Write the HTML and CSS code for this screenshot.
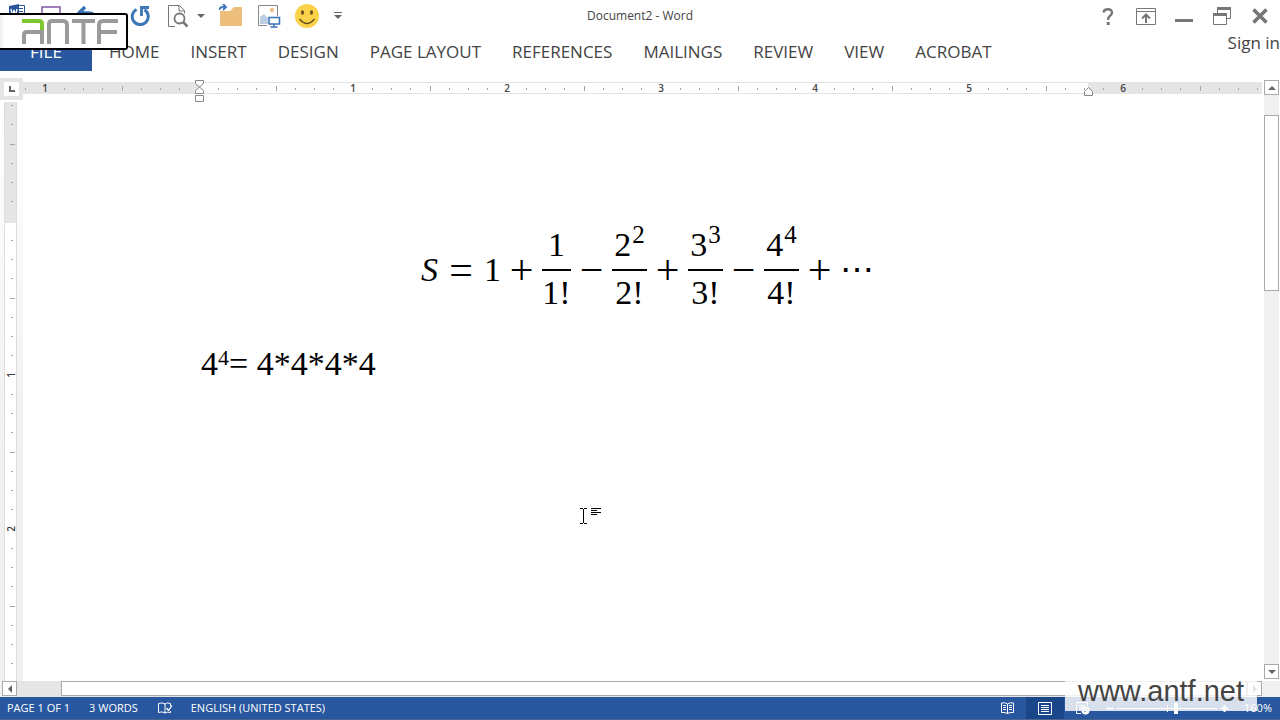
FILE: index.html
```html
<!DOCTYPE html>
<html lang="en">
<head>
<meta charset="utf-8">
<title>Document2 - Word</title>
<link rel="stylesheet" href="styles.css">
</head>
<body>
<div class="app">
  <header class="titlebar">
    <div class="quick">
      <button class="qbtn narrow" aria-label="Word"><svg width="16" height="24" viewBox="0 0 16 24"><path d="M7 1.500h8.500v17H7z" fill="#fff" stroke="#2b579a"/><path d="M9 4.500h5M9 7.500h5M9 10.500h5M9 13.500h5" stroke="#2b579a"/><path d="M0 2l10-2v21l-10-2z" fill="#2b579a"/><path d="M2 5l1.500 7L5 6l1.500 6L8 5" fill="none" stroke="#fff" stroke-width="1.300"/></svg></button>
      <button class="qbtn narrow" aria-label="Save"><svg width="20" height="20" viewBox="0 0 20 20"><path d="M1 1h18v18H1z" fill="#fff" stroke="#8059a5" stroke-width="1.500"/><path d="M5 12h10v7H5z" fill="#8059a5"/></svg></button>
      <button class="qbtn" aria-label="Undo"><svg width="22" height="20" viewBox="0 0 22 20"><path d="M2 7h10q8 0 8 8v4M9 1L3 7l6 6" fill="none" stroke="#3a73b5" stroke-width="3.500"/></svg></button>
      <button class="qbtn caret" aria-label="Undo list"><svg width="8" height="5"><path d="M0 0h8L4 4z" fill="#666"/></svg></button>
      <button class="qbtn" aria-label="Repeat"><svg width="20" height="22" viewBox="0 0 20 22"><path d="M6.500 4.500a8 8 0 1 0 8 .300" fill="none" stroke="#3c76b6" stroke-width="3"/><path d="M11.500 11V2.500h7.500" fill="none" stroke="#3c76b6" stroke-width="2.800"/></svg></button>
      <button class="qbtn" aria-label="Print preview"><svg width="22" height="24" viewBox="0 0 22 24"><path d="M8 22.500H1.500v-21h11l5 5v3M12 1.500v5.500h5.500" fill="none" stroke="#777"/><circle cx="12.500" cy="14.500" r="5" fill="#fff" stroke="#777" stroke-width="1.800"/><path d="M16 18l4.500 4.500" stroke="#777" stroke-width="2.500"/></svg></button>
      <button class="qbtn caret" aria-label="Preview list"><svg width="8" height="5"><path d="M0 0h8L4 4z" fill="#666"/></svg></button>
      <button class="qbtn" aria-label="Open"><svg width="24" height="24" viewBox="0 0 24 24"><path d="M1 22V7h10l4-4h8v19z" fill="#edbd7b"/><path d="M0 6q1-4 6-3M4 0l3 3-3 3" fill="none" stroke="#3a73b5" stroke-width="1.800"/></svg></button>
      <button class="qbtn" aria-label="Pictures"><svg width="24" height="24" viewBox="0 0 24 24"><path d="M10 21.500H1.500v-20h19V12" fill="#fff" stroke="#888"/><circle cx="15" cy="6" r="2.200" fill="#f0c08a"/><path d="M3 20v-7l4-3 4 4v6z" fill="#bccfe4"/><path d="M12 13.500h10.500V20H12z" fill="#fff" stroke="#3a73b5" stroke-width="1.500"/><path d="M17 20v3M13.500 23h7" stroke="#3a73b5" stroke-width="1.500"/></svg></button>
      <button class="qbtn" aria-label="Smiley"><svg width="24" height="24" viewBox="0 0 24 24"><circle cx="12" cy="12" r="12" fill="#fbd148"/><ellipse cx="7.500" cy="8.500" rx="1.500" ry="2.300" fill="#654c20"/><ellipse cx="16.500" cy="8.500" rx="1.500" ry="2.300" fill="#654c20"/><path d="M4.500 15q7.500 9 15 0" fill="none" stroke="#654c20" stroke-width="1.300"/></svg></button>
      <button class="qbtn small" aria-label="Customize toolbar"><svg width="8" height="8"><path d="M0 .5h8" stroke="#666"/><path d="M0 3h8L4 7z" fill="#666"/></svg></button>
    </div>
    <div class="doctitle">Document2 - Word</div>
    <div class="window">
      <button class="wbtn" aria-label="Help"><svg width="12" height="17" viewBox="0 0 12 17"><path d="M1.500 4.500Q2 1.300 6 1.300q4 0 4 3.300 0 1.900-2.200 3.400Q6 9.300 6 12" fill="none" stroke="#777" stroke-width="2.400"/><path d="M4.700 14h3v3h-3z" fill="#777"/></svg></button>
      <button class="wbtn" aria-label="Ribbon display options"><svg width="20" height="17" viewBox="0 0 20 17"><path d="M.5.500h19v16H.5zM.5 3.500h19" fill="none" stroke="#777"/><path d="M10 15V7M6 10.500l4-4 4 4" fill="none" stroke="#777" stroke-width="2"/></svg></button>
      <button class="wbtn" aria-label="Minimize"><svg width="18" height="12"><path d="M0 9h18v3H0z" fill="#777"/></svg></button>
      <button class="wbtn" aria-label="Restore"><svg width="18" height="18" viewBox="0 0 18 18"><path d="M4.500 6V.5h13v11H14" fill="none" stroke="#777"/><path d="M4 0h14v3H4z" fill="#777"/><path d="M.5 6.500h13v11H.5z" fill="#fff" stroke="#777"/><path d="M0 6h14v3H0z" fill="#777"/></svg></button>
      <button class="wbtn" aria-label="Close"><svg width="16" height="16" viewBox="0 0 16 16"><path d="M1.500 1.500l13 13M14.500 1.500l-13 13" stroke="#777" stroke-width="3.600"/></svg></button>
    </div>
  </header>

  <nav class="tabs">
    <button class="file">FILE</button>
    <button class="tab">HOME</button>
    <button class="tab">INSERT</button>
    <button class="tab">DESIGN</button>
    <button class="tab">PAGE LAYOUT</button>
    <button class="tab">REFERENCES</button>
    <button class="tab">MAILINGS</button>
    <button class="tab">REVIEW</button>
    <button class="tab">VIEW</button>
    <button class="tab">ACROBAT</button>
    <a class="signin" href="#">Sign in</a>
  </nav>

  <div class="work">
    <div class="corner"><button class="tabstop" aria-label="Tab stop"><svg width="6" height="6"><path d="M1 0v5h5" fill="none" stroke="#666" stroke-width="2"/></svg></button></div>
    <div class="hruler">
      <svg class="hscale" width="100%" height="22">
        <defs><pattern id="inch" x="176" y="0" width="154" height="22" patternUnits="userSpaceOnUse"><path d="M19.500 10v2M38.500 10v2M57.500 10v2M77.500 8v5M96.500 10v2M115.500 10v2M134.500 10v2" stroke="#a5a5a5"/></pattern></defs>
        <rect y="4" width="100%" height="12" fill="#e5e5e5"/>
        <rect x="176" y="5" width="889" height="10" fill="#fff"/>
        <rect width="100%" height="22" fill="url(#inch)"/>
        <g class="nums"><text x="22" y="14">1</text><text x="330" y="14">1</text><text x="484" y="14">2</text><text x="638" y="14">3</text><text x="792" y="14">4</text><text x="946" y="14">5</text><text x="1100" y="14">6</text></g>
        <path d="M172.500 2.500h8v3l-8 7v3h8v-3l-8-7zM172.500 17.500h8v6h-8z" fill="#fff" stroke="#888"/>
        <path d="M1061.500 17.500v-4l4-4 4 4v4z" fill="#fff" stroke="#888"/>
      </svg>
    </div>
    <div class="vruler">
      <svg width="23" height="100%">
        <defs><pattern id="vinch" x="0" y="119" width="23" height="154" patternUnits="userSpaceOnUse"><path d="M11 19.500h2M11 38.500h2M11 57.500h2M10 77.500h5M11 96.500h2M11 115.500h2M11 134.500h2" stroke="#a5a5a5"/></pattern></defs>
        <rect x="4" width="13" height="100%" fill="#dedede"/>
        <rect x="5" width="11" height="121" fill="#e5e5e5"/>
        <rect x="5" y="121" width="11" height="100%" fill="#fff"/>
        <rect width="23" height="100%" fill="url(#vinch)"/>
        <g class="nums"><text transform="translate(15 273) rotate(-90)">1</text><text transform="translate(15 427) rotate(-90)">2</text></g>
      </svg>
    </div>
    <main class="page">
      <div class="equation">
        <i>S</i><span class="op rel">=</span><span>1</span><span class="op">+</span>
        <span class="frac"><span class="num">1</span><span class="den">1!</span></span><span class="op">−</span>
        <span class="frac wide"><span class="num">2<sup>2</sup></span><span class="den">2!</span></span><span class="op">+</span>
        <span class="frac wide"><span class="num">3<sup>3</sup></span><span class="den">3!</span></span><span class="op">−</span>
        <span class="frac wide"><span class="num">4<sup>4</sup></span><span class="den">4!</span></span><span class="op">+</span><span class="dots">⋯</span>
      </div>
      <p class="line">4<sup>4</sup>= 4*4*4*4</p>
      <svg class="cursor" width="22" height="18"><path d="M0 1.500h3M4 1.500h3M0 16.500h3M4 16.500h3M3.500 2v14M11 1.500h10M11 3.500h6M11 5.500h10M11 7.500h6" stroke="#000"/></svg>
    </main>
    <div class="vscroll">
      <button class="arrow" aria-label="Scroll up"><svg width="8" height="4"><path d="M0 4l4-4 4 4z" fill="#666"/></svg></button>
      <div class="vtrack"><div class="vthumb"></div></div>
      <button class="arrow" aria-label="Scroll down"><svg width="8" height="4"><path d="M0 0h8L4 4z" fill="#666"/></svg></button>
    </div>
  </div>

  <div class="hscroll">
    <button class="arrow" aria-label="Scroll left"><svg width="4" height="8"><path d="M4 0v8L0 4z" fill="#666"/></svg></button>
    <div class="htrack"><div class="hthumb"></div></div>
    <button class="arrow" aria-label="Scroll right"><svg width="4" height="8"><path d="M0 0v8l4-4z" fill="#666"/></svg></button>
  </div>

  <footer class="status">
    <span>PAGE 1 OF 1</span>
    <span>3 WORDS</span>
    <button class="sbtn proof" aria-label="Proofing"><svg width="15" height="13" viewBox="0 0 15 13"><path d="M7 11Q4 9 .5 10.500V1.500Q4 0 7 2zM7 2q2-2 5.500-.500V4M7 11q2-1.500 5.500-.500V9" fill="none" stroke="#fff"/><path d="M8.500 6l2 2.500L14 3.500" fill="none" stroke="#fff" stroke-width="1.300"/></svg></button>
    <span>ENGLISH (UNITED STATES)</span>
    <div class="views">
      <button class="sbtn view" aria-label="Read mode"><svg width="13" height="12" viewBox="0 0 13 12"><path d="M6.500 11.500V2Q4 0 .5 1v9.500q3.500-.500 6 1 2.500-1.500 6-1V1q-3.500-1-6 1M2 3.500h3M2 5.500h3M2 7.500h3M8 3.500h3M8 5.500h3M8 7.500h3" fill="none" stroke="#fff"/></svg></button>
      <button class="sbtn view active" aria-label="Print layout"><svg width="14" height="13"><path d="M.5.500h13v12H.5zM3 3.500h8M3 5.500h8M3 7.500h8M3 9.500h8" fill="none" stroke="#fff"/></svg></button>
      <button class="sbtn view" aria-label="Web layout"><svg width="14" height="13"><path d="M5 11.500H.5V.5h11V4M3 3.500h6M3 5.500h4M3 7.500h2" fill="none" stroke="#fff"/><circle cx="9.500" cy="8.500" r="4" fill="#fff"/><path d="M7 7l2 1v2M10 6l2 2" fill="none" stroke="#2b579a"/></svg></button>
    </div>
    <button class="sbtn zoombtn" aria-label="Zoom out"><svg width="7" height="7"><path d="M0 3.500h7" stroke="#fff" stroke-width="2"/></svg></button>
    <input class="zoom" type="range" min="0" max="200" value="118" aria-label="Zoom">
    <button class="sbtn zoombtn" aria-label="Zoom in"><svg width="7" height="7"><path d="M0 3.500h7M3.500 0v7" stroke="#fff" stroke-width="2"/></svg></button>
    <span class="percent">160%</span>
  </footer>

  <div class="logo">
    <svg width="98" height="26" viewBox="0 0 98 26" fill="none" stroke="#989a9b" stroke-width="4">
      <path d="M2 25v-9q0-3 3-3h16M20 11v14M27 25V5q0-3 3-3h11q4 0 4 4v19M50 2h23M61.500 2v23M77 25V6q0-4 4-4h15M77 13h18"/>
      <path d="M0 2h17q3 0 3 3v6" stroke="#7fc52e"/>
    </svg>
  </div>
  <div class="watermark">www.antf.net</div>
</div>
</body>
</html>
```
FILE: styles.css
```css
* { box-sizing: border-box; }
body { margin: 0; font-family: "Open Sans", "Noto Sans", sans-serif; color: #444; background: #fff; }
button { border: 0; padding: 0; margin: 0; background: none; font: inherit; color: inherit; display: flex; align-items: center; justify-content: center; }
svg { display: block; }
.app { position: relative; height: 100vh; display: flex; flex-direction: column; overflow: hidden; }

.titlebar { height: 32px; flex: none; display: grid; grid-template-columns: 1fr auto 1fr; align-items: center; }
.quick { display: flex; align-items: center; }
.qbtn { width: 38px; height: 30px; flex: none; }
.qbtn.narrow { width: 34px; }
.qbtn.small { width: 24px; }
.qbtn.caret { width: 8px; margin-right: 7px; }
.doctitle { font-size: 12px; line-height: 16px; }
.window { display: flex; justify-content: flex-end; padding-right: 1px; }
.wbtn { width: 38px; height: 30px; }

.tabs { height: 46px; flex: none; display: flex; align-items: flex-start; font-size: 17px; line-height: 24px; }
.file { width: 92px; height: 39px; background: #2857a0; color: #fff; margin-right: 17px; }
.tab { height: 39px; margin-right: 31px; white-space: nowrap; }
.signin { margin-left: auto; color: #444; text-decoration: none; white-space: nowrap; font-size: 17px; line-height: 22px; }

.work { flex: 1; min-height: 0; display: grid; grid-template-columns: 23px 1fr 18px; grid-template-rows: 24px 1fr; }
.corner { height: 22px; background: #e5e5e5; padding: 4px; }
.tabstop { width: 15px; height: 14px; background: #fff; }
.hruler { min-width: 0; }
.hscale { overflow: visible; }
.nums { font-size: 10px; fill: #444; text-anchor: middle; font-weight: 600; }
.vruler { grid-column: 1; grid-row: 2; min-height: 0; overflow: hidden; background: linear-gradient(#fff, #f0f0f0 60%); }
.page { grid-column: 2; grid-row: 2; position: relative; min-width: 0; padding: 112px 176px 0; color: #000; font-family: "Liberation Serif", serif; font-size: 34px; }
.vscroll { grid-column: 3; grid-row: 1 / 3; display: flex; flex-direction: column; padding: 2px 1px 2px 2px; }
.arrow { width: 15px; height: 15px; flex: none; border: 1px solid #aaa; background: #fff; }
.vtrack { flex: 1; background: #f0f0f0; padding-top: 20px; }
.vthumb { height: 32%; border: 1px solid #aaa; background: #fff; }

.equation { display: flex; align-items: center; justify-content: center; height: 112px; padding-left: 10px; line-height: 40px; }
.op { width: 41px; font-size: 42px; text-align: center; }
.op.rel { width: 46px; }
.frac { width: 29px; display: flex; flex-direction: column; align-items: center; }
.frac.wide { width: 35px; }
.num { width: 100%; height: 50px; padding-top: 4px; border-bottom: 2px solid #000; text-align: center; white-space: nowrap; }
.den { height: 48px; padding-top: 2px; }
sup { font-size: 22px; line-height: 0; vertical-align: 10px; }
.num sup { font-size: 25px; vertical-align: 13px; margin-left: 1px; }
.line { margin: 16px 0 0 2px; line-height: 44px; }
.cursor { position: absolute; left: 557px; top: 405px; }

.hscroll { height: 16px; flex: none; display: flex; padding: 0 18px 0 2px; background: #f0f0f0; }
.htrack { flex: 1; background: #e5e5e5; padding-left: 44px; }
.hthumb { height: 15px; border: 1px solid #aaa; background: #fff; }

.status { height: 23px; flex: none; display: flex; align-items: center; padding-left: 7px; background: #2857a0; border-bottom: 1px solid #48658f; color: #fff; font-size: 11px; line-height: 16px; white-space: nowrap; }
.status > span { margin-right: 19px; }
.proof { margin: 0 18px 0 1px; }
.views { display: flex; align-self: stretch; margin-left: auto; }
.view { width: 38px; }
.view.active { background: #19478a; }
.zoombtn { width: 15px; height: 16px; }
.zoom { appearance: none; width: 100px; height: 14px; margin: 0; background: linear-gradient(#fff, #fff) center / 100% 1px no-repeat, linear-gradient(#fff, #fff) center / 1px 7px no-repeat; }
.zoom::-webkit-slider-thumb { appearance: none; width: 4px; height: 11px; background: #fff; }
.status > .percent { margin: 0 8px 0 12px; }

.logo { position: absolute; left: 0; top: 13px; width: 128px; height: 37px; padding: 4px 0 0 22px; border: 2px solid #000; border-left: 0; border-radius: 0 3px 3px 0; background: linear-gradient(90deg, #eee, #fff 4px); }
.watermark { position: absolute; right: 23px; bottom: 9px; width: 192px; height: 32px; background: rgba(255, 255, 255, .82); color: #444; font-family: "Liberation Sans", sans-serif; font-size: 29px; line-height: 24px; text-align: center; }
```
